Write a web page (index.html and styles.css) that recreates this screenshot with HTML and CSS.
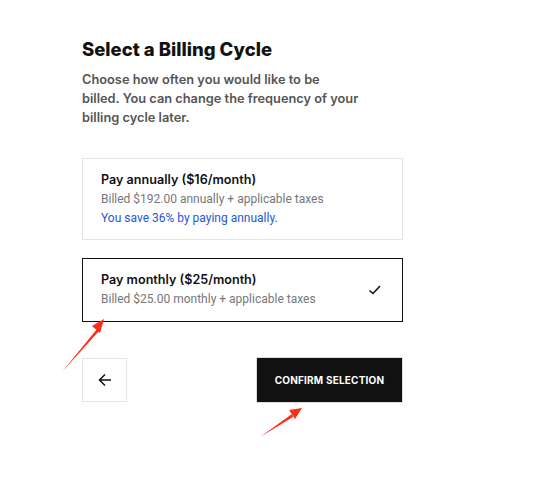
FILE: index.html
```html
<!DOCTYPE html>
<html>
<head>
<meta charset="utf-8">
<link rel="stylesheet" href="styles.css">
</head>
<body>
<main class="page">
  <h1 class="title">Select a Billing Cycle</h1>
  <p class="desc">Choose how often you would like to be billed. You can change the frequency of your billing cycle later.</p>
  <div class="options">
    <div class="option">
      <div class="option-text">
        <div class="option-title">Pay annually ($16/month)</div>
        <div class="option-sub">Billed $192.00 annually + applicable taxes</div>
        <div class="option-save">You save 36% by paying annually.</div>
      </div>
    </div>
    <div class="option selected">
      <div class="option-text">
        <div class="option-title">Pay monthly ($25/month)</div>
        <div class="option-sub">Billed $25.00 monthly + applicable taxes</div>
      </div>
      <svg class="check" width="14" height="12" viewBox="0 0 14 12"><path d="M1.5 6.5 L5 9.5 L12 2" fill="none" stroke="#111" stroke-width="1.6"/></svg>
    </div>
  </div>
  <div class="actions">
    <button class="back" aria-label="Back"><svg width="14" height="14" viewBox="0 0 14 14"><path d="M13 7 H1.5 M7 1.5 L1.5 7 L7 12.5" fill="none" stroke="#111" stroke-width="1.5"/></svg></button>
    <button class="confirm">CONFIRM SELECTION</button>
  </div>
</main>
<svg class="annot" width="545" height="500" viewBox="0 0 545 500">
  <g fill="#ff2a1a">
    <polygon points="62,372 97,329 99,331"/>
    <polygon points="104,319 92,326 100,333"/>
    <polygon points="260,437 292,414 293,417"/>
    <polygon points="302,408 289,410 295,419"/>
  </g>
</svg>
</body>
</html>
```
FILE: styles.css
```css
* { box-sizing: border-box; }
body {
  margin: 0;
  background: #fff;
  font-family: "Inter", "Noto Sans", sans-serif;
  color: #111;
}
.page {
  padding: 38px 0 0 82px;
  width: 403px;
}
.title {
  margin: 0;
  font-size: 18.5px;
  font-weight: 800;
  line-height: 22px;
  color: #111;
}
.desc {
  margin: 10px 0 0;
  max-width: 277px;
  font-size: 12.8px;
  font-weight: 600;
  line-height: 19px;
  color: #555;
}
.options {
  margin-top: 31px;
  display: flex;
  flex-direction: column;
  gap: 18px;
}
.option {
  display: flex;
  align-items: center;
  justify-content: space-between;
  border: 1px solid #e4e4e4;
  padding: 12px 20px 12px 18px;
}
.option.selected {
  border-color: #111;
}
.option-title {
  font-size: 12.6px;
  font-weight: 600;
  line-height: 18px;
  color: #111;
}
.option-sub {
  font-family: "Roboto", sans-serif;
  font-size: 12px;
  line-height: 20px;
  color: #777;
}
.option-save {
  font-family: "Roboto", sans-serif;
  font-size: 12px;
  line-height: 18px;
  color: #2456d8;
}
.actions {
  margin-top: 35px;
  display: flex;
  justify-content: space-between;
  align-items: center;
}
.back {
  width: 45px;
  height: 44px;
  border: 1px solid #e4e4e4;
  background: #fff;
  display: flex;
  align-items: center;
  justify-content: center;
  padding: 0;
}
.confirm {
  width: 147px;
  height: 46px;
  background: #111;
  color: #fff;
  border: 1px solid #ddd;
  font-family: "Inter", sans-serif;
  font-size: 10px;
  font-weight: 700;
  letter-spacing: 0.2px;
}
.annot {
  position: absolute;
  left: 0;
  top: 0;
  pointer-events: none;
}
```
